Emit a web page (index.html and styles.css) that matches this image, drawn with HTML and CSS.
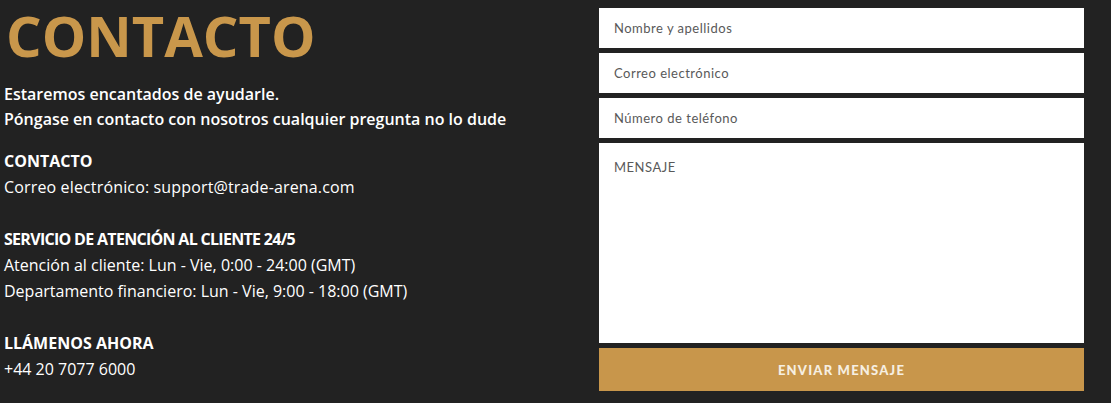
FILE: index.html
```html
<!DOCTYPE html>
<html lang="es">
<head>
<meta charset="utf-8">
<title>Contacto</title>
<link rel="stylesheet" href="styles.css">
</head>
<body>
<div class="page">
  <section class="info">
    <h1 class="title">CONTACTO</h1>
    <p class="intro">Estaremos encantados de ayudarle.<br>Póngase en contacto con nosotros cualquier pregunta no lo dude</p>
    <div class="block">
      <h2 class="head">CONTACTO</h2>
      <p class="line line-wide">Correo electrónico: support@trade-arena.com</p>
    </div>
    <div class="block">
      <h2 class="head head-tight">SERVICIO DE ATENCIÓN AL CLIENTE 24/5</h2>
      <p class="line">Atención al cliente: Lun - Vie, 0:00 - 24:00 (GMT)</p>
      <p class="line">Departamento financiero: Lun - Vie, 9:00 - 18:00 (GMT)</p>
    </div>
    <div class="block">
      <h2 class="head">LLÁMENOS AHORA</h2>
      <p class="line">+44 20 7077 6000</p>
    </div>
  </section>
  <form class="form">
    <input class="field" type="text" placeholder="Nombre y apellidos">
    <input class="field" type="email" placeholder="Correo electrónico">
    <input class="field" type="tel" placeholder="Número de teléfono">
    <textarea class="field message" placeholder="MENSAJE"></textarea>
    <button class="send" type="button">ENVIAR MENSAJE</button>
  </form>
</div>
</body>
</html>
```
FILE: styles.css
```css
html, body {
  margin: 0;
  padding: 0;
  background: #222222;
}
.page {
  display: flex;
  justify-content: space-between;
  align-items: flex-start;
  padding: 0 27px 0 4px;
  font-family: "Open Sans", "DejaVu Sans", sans-serif;
  color: #ffffff;
}
.info {
  width: 560px;
}
.title {
  margin: 0 0 0 2px;
  font-size: 56px;
  line-height: 70px;
  font-weight: 700;
  color: #c9974b;
}
.intro {
  margin: 12px 0 0 0;
  font-size: 16px;
  line-height: 25px;
  font-weight: 600;
}
.block {
  margin-top: 16px;
}
.block + .block {
  margin-top: 26px;
}
.head {
  margin: 0;
  font-size: 16px;
  line-height: 26px;
  font-weight: 700;
}
.head-tight {
  letter-spacing: -0.7px;
}
.line {
  margin: 0;
  font-size: 16px;
  line-height: 26px;
  font-weight: 400;
}
.line-wide {
  letter-spacing: 0.15px;
}
.form {
  width: 485px;
  margin-top: 8px;
  display: flex;
  flex-direction: column;
  gap: 5px;
}
.field {
  box-sizing: border-box;
  height: 40px;
  border: none;
  outline: none;
  background: #ffffff;
  padding: 0 15px;
  font-family: "Lato", "Open Sans", sans-serif;
  font-size: 13px;
  letter-spacing: 0.5px;
  color: #333333;
}
.field::placeholder {
  color: #595959;
}
.message {
  height: 200px;
  padding: 16px 15px;
  resize: none;
}
.send {
  height: 43px;
  border: none;
  background: #c8964b;
  color: #f6efe2;
  font-family: "Lato", "Open Sans", sans-serif;
  font-weight: 900;
  font-size: 13px;
  letter-spacing: 1.2px;
}
```
